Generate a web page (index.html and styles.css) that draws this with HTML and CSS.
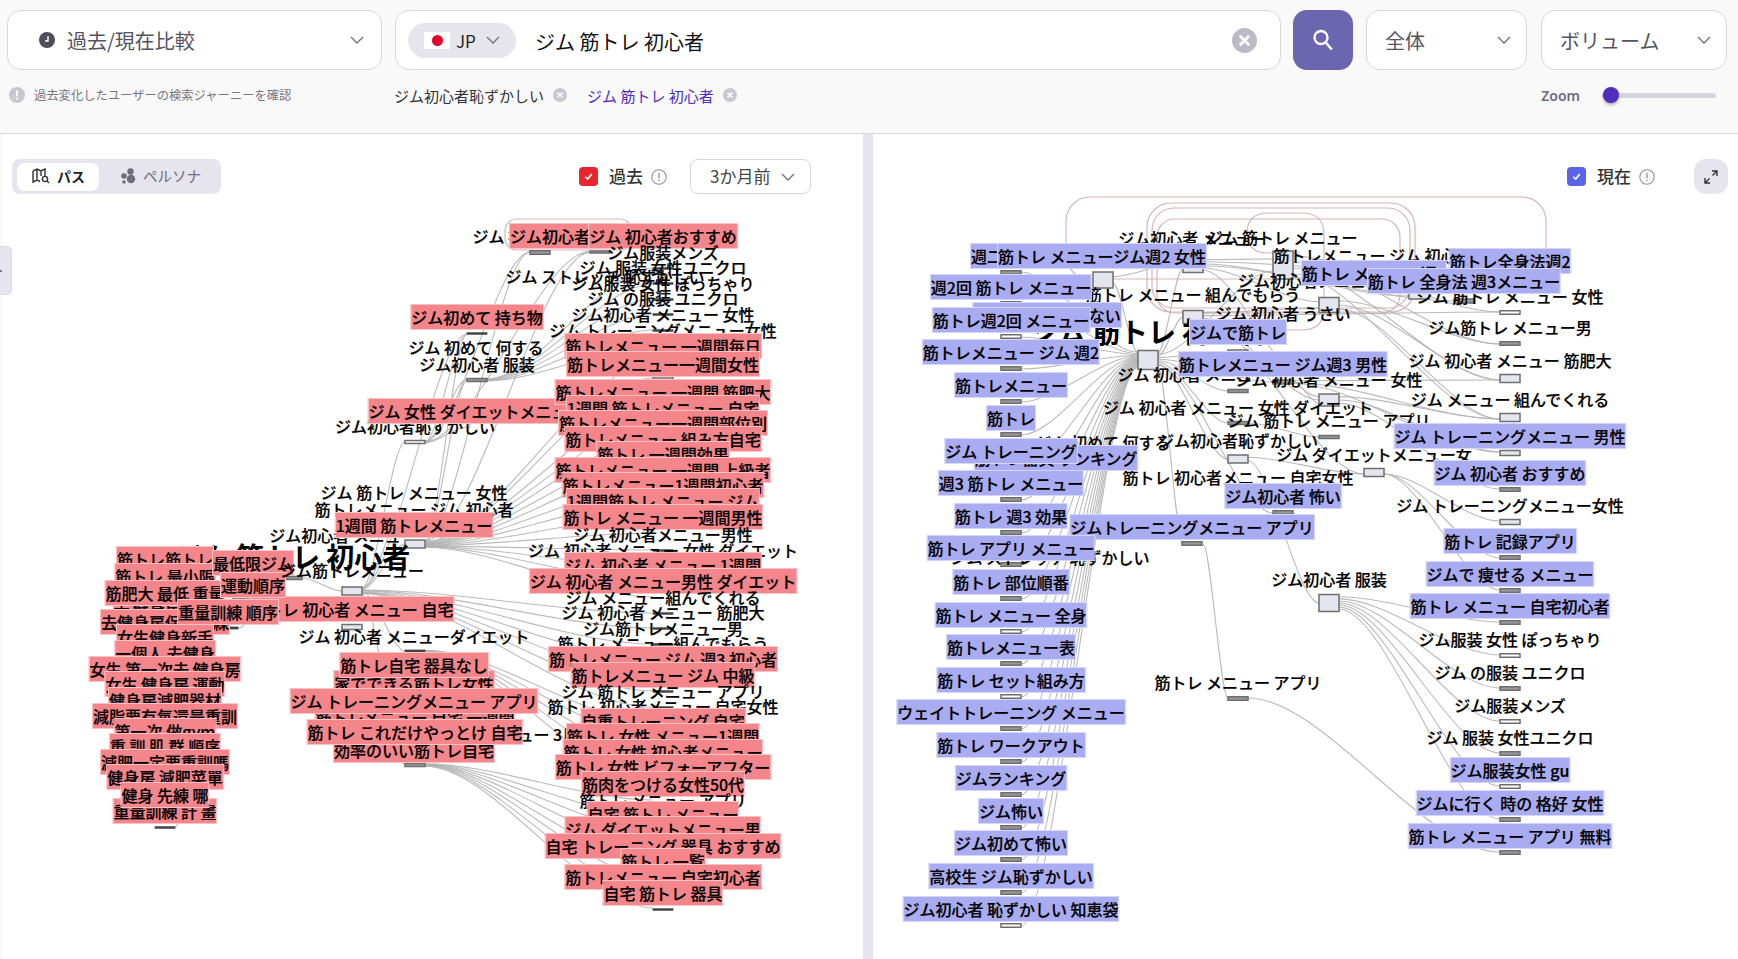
FILE: index.html
```html
<!DOCTYPE html>
<html lang="ja">
<head>
<meta charset="utf-8">
<title>過去/現在比較</title>
<link rel="stylesheet" href="styles.css">
</head>
<body>
<header class="top">
  <div class="row-main">
    <div class="box box-mode">
      <svg class="ico-clock" viewBox="0 0 16 16"><circle cx="8" cy="8" r="8" fill="#4f4d5c"/><path d="M9 4v5H6" fill="none" stroke="#fff" stroke-width="1.4"/></svg>
      <span class="box-text">過去/現在比較</span>
      <svg class="chev" viewBox="0 0 14 8"><path d="M1 1l6 6 6-6"/></svg>
    </div>
    <div class="box box-search">
      <div class="pill">
        <span class="flag"><i></i></span>
        <span class="pill-text">JP</span>
        <svg class="chev" viewBox="0 0 14 8"><path d="M1 1l6 6 6-6"/></svg>
      </div>
      <span class="query">ジム 筋トレ 初心者</span>
      <svg class="ico-clear" viewBox="0 0 24 24"><circle cx="12" cy="12" r="12" fill="#bdbac8"/><path d="M7.5 7.5l9 9M16.5 7.5l-9 9" stroke="#fff" stroke-width="2.6"/></svg>
    </div>
    <button class="btn-search" type="button" aria-label="検索">
      <svg viewBox="0 0 24 24"><circle cx="10" cy="9.5" r="6.5" fill="none" stroke="#fff" stroke-width="2.4"/><path d="M14.8 14.5l6 7" stroke="#fff" stroke-width="2.6"/></svg>
    </button>
    <div class="box box-scope"><span class="box-text">全体</span><svg class="chev" viewBox="0 0 14 8"><path d="M1 1l6 6 6-6"/></svg></div>
    <div class="box box-metric"><span class="box-text">ボリューム</span><svg class="chev" viewBox="0 0 14 8"><path d="M1 1l6 6 6-6"/></svg></div>
  </div>
  <div class="row-sub">
    <div class="hint">
      <svg class="ico-i" viewBox="0 0 16 16"><circle cx="8" cy="8" r="8" fill="#c9c7d1"/><path d="M8 3.5v6M8 11v1.6" stroke="#fff" stroke-width="2"/></svg>
      <span>過去変化したユーザーの検索ジャーニーを確認</span>
    </div>
    <div class="tags">
      <span class="tag">ジム初心者恥ずかしい</span>
      <svg class="ico-x" viewBox="0 0 14 14"><circle cx="7" cy="7" r="7" fill="#c9c7d1"/><path d="M4.5 4.5l5 5M9.5 4.5l-5 5" stroke="#fff" stroke-width="1.6"/></svg>
      <span class="tag tag-on">ジム 筋トレ 初心者</span>
      <svg class="ico-x" viewBox="0 0 14 14"><circle cx="7" cy="7" r="7" fill="#c9c7d1"/><path d="M4.5 4.5l5 5M9.5 4.5l-5 5" stroke="#fff" stroke-width="1.6"/></svg>
    </div>
    <div class="zoom">
      <span class="zoom-label">Zoom</span>
      <div class="track"><span class="thumb"></span></div>
    </div>
  </div>
</header>
<main class="panels">
  <section class="panel panel-past">
    <div class="stage" id="stage-past"></div>
    <span class="side-tab"></span>
    <div class="bar">
      <div class="seg">
        <span class="seg-on">
          <svg viewBox="0 0 18 16" class="seg-ico"><path d="M1 3l4-2 4 2 4-2v7M1 3v11l4-2 3 1.500M5 1v11M9 3v5" fill="none" stroke="#333" stroke-width="1.400"/><circle cx="13" cy="11" r="2.600" fill="none" stroke="#333" stroke-width="1.400"/><path d="M15 13l2 2" stroke="#333" stroke-width="1.400"/></svg>
          パス
        </span>
        <span class="seg-off">
          <svg viewBox="0 0 16 16" class="seg-ico seg-ico-off"><circle cx="10.500" cy="3.500" r="3.200"/><circle cx="4" cy="8" r="2.800"/><circle cx="11" cy="11" r="4.200"/><circle cx="4" cy="14" r="1.800"/></svg>
          ペルソナ
        </span>
      </div>
      <div class="legend">
        <span class="check check-red"><svg viewBox="0 0 12 12"><path d="M3 6.200l2.200 2.200L9 3.800" fill="none" stroke="#fff" stroke-width="1.500"/></svg></span>
        <span class="legend-text">過去</span>
        <svg class="ico-info" viewBox="0 0 16 16"><circle cx="8" cy="8" r="7.200" fill="none" stroke="#8f8d9c" stroke-width="1.100"/><path d="M8 3.800v5.400M8 10.600v1.400" stroke="#8f8d9c" stroke-width="1.300"/></svg>
        <div class="period"><span class="period-text">3か月前</span><svg class="chev" viewBox="0 0 14 8"><path d="M1 1l6 6 6-6"/></svg></div>
      </div>
    </div>
  </section>
  <div class="divider"></div>
  <section class="panel panel-now">
    <div class="stage" id="stage-now"></div>
    <div class="bar bar-now">
      <span class="check check-blue"><svg viewBox="0 0 12 12"><path d="M3 6.200l2.200 2.200L9 3.800" fill="none" stroke="#fff" stroke-width="1.500"/></svg></span>
      <span class="legend-text">現在</span>
      <svg class="ico-info" viewBox="0 0 16 16"><circle cx="8" cy="8" r="7.200" fill="none" stroke="#8f8d9c" stroke-width="1.100"/><path d="M8 3.800v5.400M8 10.600v1.400" stroke="#8f8d9c" stroke-width="1.300"/></svg>
      <span class="expand"><svg viewBox="0 0 14 14"><path d="M8 1h5v5M13 1L8.500 5.500M6 13H1V8M1 13l4.500-4.500" fill="none" stroke="#333" stroke-width="1.400"/></svg></span>
    </div>
  </section>
</main>
<script src="graph.js"></script>
</body>
</html>
```
FILE: styles.css
```css
* { box-sizing: border-box; }
html, body { margin: 0; height: 100%; }
body {
  width: 1738px;
  height: 959px;
  overflow: hidden;
  background: #fff;
  font-family: "Noto Sans CJK JP", "Noto Sans", sans-serif;
  color: #222;
  display: flex;
  flex-direction: column;
}
svg { display: block; flex: none; }

.top {
  height: 134px;
  flex: none;
  background: #f9f9f9;
  border-bottom: 1px solid #d9d7e0;
  padding: 10px 10px 0 7px;
}
.row-main { display: flex; height: 60px; }
.box {
  display: flex;
  align-items: center;
  height: 60px;
  background: #fff;
  border: 1px solid #d8d6e0;
  border-radius: 14px;
}
.box-text { font-size: 20px; color: #55535f; white-space: nowrap; }
.chev { width: 14px; height: 8px; fill: none; stroke: #7b7986; stroke-width: 1.500; margin-left: auto; }
.box-mode { width: 375px; margin-right: 13px; padding: 0 17px 0 31px; }
.ico-clock { width: 16px; height: 16px; margin-right: 12px; }
.box-search { width: 886px; margin-right: 12px; padding: 0 23px 0 12px; }
.pill {
  display: flex;
  align-items: center;
  width: 108px;
  height: 35px;
  padding: 0 16px;
  background: #e7e5ec;
  border-radius: 18px;
}
.flag { width: 26px; height: 17px; background: #fff; display: flex; align-items: center; justify-content: center; }
.flag i { width: 11px; height: 11px; border-radius: 50%; background: #e2002b; }
.pill-text { font-size: 17px; margin-left: 6px; color: #222; }
.query { font-size: 20px; color: #111; margin-left: 19px; padding-top: 2px; }
.ico-clear { width: 25px; height: 25px; margin-left: auto; }
.btn-search {
  width: 60px;
  height: 60px;
  margin-right: 13px;
  padding: 0;
  border: 0;
  border-radius: 14px;
  background: #6c65b0;
  display: flex;
  align-items: center;
  justify-content: center;
}
.btn-search svg { width: 24px; height: 24px; }
.box-scope { width: 161px; margin-right: 14px; padding: 0 15px 0 18px; }
.box-metric { width: 186px; padding: 0 15px 0 18px; }

.row-sub { display: flex; align-items: center; height: 22px; margin-top: 14px; }
.hint { display: flex; align-items: center; width: 385px; margin-left: 2px; font-size: 12.300px; color: #77757f; }
.ico-i { width: 16px; height: 16px; margin-right: 9px; }
.tags { display: flex; align-items: center; }
.tag { font-size: 15px; color: #333; white-space: pre; }
.tag-on { color: #4b2ec0; margin-left: 20px; }
.ico-x { width: 14px; height: 14px; margin-left: 9px; }
.zoom { display: flex; align-items: center; margin-left: auto; margin-right: 12px; }
.zoom-label { font-family: "Noto Sans", sans-serif; font-size: 14px; font-weight: 600; color: #6d6b7c; margin-right: 22px; }
.track { position: relative; width: 114px; height: 5px; background: #d6d4de; border-radius: 3px; }
.thumb {
  position: absolute;
  left: 1px;
  top: -5.500px;
  width: 16px;
  height: 16px;
  border-radius: 50%;
  background: #4f2dbd;
  box-shadow: 0 2px 3px rgba(0,0,0,.3);
}

.panels { flex: 1; display: flex; min-height: 0; }
.panel { position: relative; height: 825px; }
.panel-past { width: 863px; background: linear-gradient(90deg, #f6f6f6, #fff 4px); }
.panel-now { width: 865px; }
.divider { width: 10px; background: #e6e4ec; }
.stage { position: absolute; inset: 0; }
.stage svg { position: absolute; left: 0; top: 0; width: 100%; height: 100%; }
.side-tab {
  position: absolute;
  left: 0;
  top: 112px;
  width: 12px;
  height: 49px;
  background: #e6e4ec;
  border: 1px solid #dcdae3;
  border-left: 0;
  border-radius: 0 5px 5px 0;
}
.side-tab::after {
  content: "";
  position: absolute;
  left: 0;
  top: 23px;
  width: 2px;
  height: 2px;
  background: #777;
}

.bar {
  position: relative;
  display: flex;
  align-items: center;
  justify-content: space-between;
  height: 35px;
  margin-top: 25px;
  padding: 0 52px 0 12px;
}
.seg {
  display: flex;
  align-items: center;
  width: 209px;
  height: 35px;
  padding: 0 5px;
  background: #e6e4ec;
  border-radius: 8px;
}
.seg-on, .seg-off { display: flex; align-items: center; height: 28px; white-space: nowrap; padding-bottom: 2px; }
.seg-on { width: 82px; padding-left: 15px; background: #fff; border-radius: 8px; font-size: 14px; font-weight: 700; color: #222; }
.seg-off { padding-left: 21px; font-size: 14.500px; color: #6f6d7a; }
.seg-ico { width: 18px; height: 16px; margin-right: 7px; }
.seg-ico-off { width: 16px; fill: #6f6d7a; }
.legend { display: flex; align-items: center; }
.check { width: 19px; height: 19px; border-radius: 4px; display: flex; align-items: center; justify-content: center; }
.check svg { width: 13px; height: 13px; }
.check-red { background: #e9252e; }
.check-blue { background: #5b63e6; }
.legend-text { font-size: 17px; font-weight: 500; color: #333; margin-left: 11px; padding-bottom: 2px; }
.ico-info { width: 16px; height: 16px; margin-left: 8px; }
.period {
  display: flex;
  align-items: center;
  width: 121px;
  height: 35px;
  margin-left: 23px;
  padding: 0 15px 0 19px;
  background: #fff;
  border: 1px solid #d8d6e0;
  border-radius: 8px;
  font-size: 17px;
  color: #444;
}
.period-text { padding-bottom: 2px; }
.bar-now { justify-content: flex-end; padding: 0 10px 0 0; }
.expand {
  width: 34px;
  height: 35px;
  margin-left: 39px;
  display: flex;
  align-items: center;
  justify-content: center;
  background: #e6e4ec;
  border-radius: 12px;
}
.expand svg { width: 14px; height: 14px; }

.edge { fill: none; stroke: #b2b2b2; stroke-width: 1.100; stroke-opacity: .9; }
.loop { fill: none; stroke: #d6b6ba; stroke-width: 1.200; }
.node { stroke: #6e6e6e; stroke-width: 1.500; fill: #e4e5ee; }
.node-w { fill: #fff; }
.node-g { fill: #9a9a9a; }
.node-k { fill: #444; stroke: #444; stroke-width: .8; }

.lbl {
  position: absolute;
  height: 24px;
  line-height: 24px;
  font-size: 16px;
  font-weight: 500;
  color: #000;
  -webkit-text-stroke: .2px #000;
  white-space: pre;
  transform: translate(-50%, -50%);
}
.lbl-pink { background: #f4868b; outline: 1px solid #f9c3c6; }
.lbl-blue { background: #a9acf1; outline: 1px solid #d6d7f8; }
.lbl-big { font-size: 28px; height: 36px; line-height: 36px; font-weight: 700; -webkit-text-stroke: 0; }
```
FILE: graph.js
```js
// [text, centre x, centre y, kind (0 plain, 1 highlighted, 2 root), node under the label]
var past = {
  ox: 0, oy: 134, hl: "lbl-pink",
  loops: [[505, 219, 127, 31, 12]],
  extra: [[292, 578, 3, "g"], [352, 591, 8, ""], [415, 544, 8, ""], [228, 628, 2, "k"], [243, 599, 2, "w"], [600, 252, 2, "g"], [663, 378, 2, "w"], [352, 627, 5, ""], [415, 442, 3, "w"], [477, 380, 3, "g"], [415, 765, 3, "g"], [415, 651, 2, "k"]],
  labels: [
    ["ジム 筋トレ 初心者", 292, 557, 2],
    ["ジム初心者 メニュー", 343, 536, 0],
    ["筋トレ 初心者 メニュー 自宅", 352, 610, 1],
    ["筋トレ筋トレ", 165, 560, 1],
    ["筋トレ 最小限", 165, 577, 1],
    ["去 健身房 重量", 165, 609, 1],
    ["筋肥大 最低 重量", 165, 594, 1],
    ["去健身房保持訓練", 165, 623, 1],
    ["女生健身新手", 165, 638, 1],
    ["一個人 去健身", 165, 654, 1],
    ["女生 第一次去 健身房", 165, 670, 1],
    ["女生 健身房 運動", 165, 685, 1],
    ["健身房減肥器材", 165, 701, 1],
    ["減脂要有氧還是重訓", 165, 717, 1],
    ["第一次 做gym", 165, 732, 1],
    ["重 訓 肌 群 順序", 165, 747, 1],
    ["減肥一定要重訓嗎", 165, 763, 1],
    ["健身房 減肥菜單", 165, 778, 1],
    ["重量訓練 計 畫", 165, 812, 1, "k"],
    ["健身 先練 哪", 165, 796, 1],
    ["最低限ジム", 253, 564, 1],
    ["運動順序", 253, 586, 1],
    ["重量訓練 順序", 228, 613, 1],
    ["ジム筋トレメニュー", 352, 571, 0],
    ["ジム 筋トレ メニュー 女性", 414, 493, 0],
    ["筋トレメニュー ジム 初心者", 414, 510, 0],
    ["1週間 筋トレメニュー", 414, 526, 1],
    ["ジム初心者恥ずかしい", 415, 427, 0],
    ["ジム 初心者 メニューダイエット", 414, 637, 0],
    ["家でできる筋トレ女性", 414, 684, 1],
    ["筋トレ自宅 器具なし", 414, 666, 1],
    ["ジム初心者 メニュー 3日", 490, 735, 0],
    ["筋トレメニュー 自宅 一週間", 415, 718, 1],
    ["ジム トレーニングメニュー アプリ", 414, 702, 1],
    ["効率のいい筋トレ自宅", 414, 751, 1],
    ["筋トレ これだけやっとけ 自宅", 415, 733, 1],
    ["ジム初めて 持ち物", 477, 318, 1, "k"],
    ["ジム 初めて 何する", 476, 348, 0],
    ["ジム初心者 服装", 477, 365, 0],
    ["ジム 女性 ダイエットメニュー", 476, 412, 1],
    ["ジム 初心者 何から", 540, 237, 0, "g"],
    ["ジム初心者", 550, 237, 1],
    ["ジム ストレッチ 恥ずかしい", 605, 277, 0],
    ["ジム 初心者おすすめ", 663, 237, 1],
    ["ジム服装メンズ", 663, 253, 0, "k"],
    ["ジム 服装 女性ユニクロ", 663, 268, 0, "k"],
    ["ジム服装 女性 ぽっちゃり", 663, 284, 0, "k"],
    ["ジム の服装 ユニクロ", 663, 299, 0, "k"],
    ["ジム初心者 メニュー 女性", 663, 315, 0, "k"],
    ["ジム トレーニングメニュー女性", 663, 331, 0, "k"],
    ["筋トレメニュー 一週間毎日", 663, 347, 1],
    ["筋トレメニュー一週間女性", 663, 365, 1],
    ["筋トレメニュー 一週間 筋肥大", 663, 393, 1],
    ["1週間 筋トレメニュー 自宅", 663, 409, 1],
    ["筋トレメニュー一週間部位別", 663, 424, 1],
    ["筋トレメニュー 組み方自宅", 663, 440, 1],
    ["筋トレ 一週間効果", 663, 455, 1],
    ["筋トレメニュー 一週間 上級者", 663, 471, 1],
    ["筋トレメニュー1週間初心者", 663, 486, 1],
    ["1週間筋トレ メニュー ジム", 663, 502, 1],
    ["筋トレ メニュー 一週間男性", 663, 518, 1],
    ["ジム 初心者メニュー男性", 663, 535, 0, "k"],
    ["ジム 初心者 メニュー 女性 ダイエット", 663, 551, 0, "k"],
    ["ジム 初心者 メニュー 1週間", 663, 566, 1],
    ["ジム 初心者 メニュー男性 ダイエット", 663, 582, 1],
    ["ジム メニュー組んでくれる", 663, 598, 0, "k"],
    ["ジム 初心者 メニュー 筋肥大", 663, 613, 0, "k"],
    ["ジム筋トレメニュー男", 663, 629, 0, "k"],
    ["筋トレ メニュー組んでもらう", 663, 644, 0],
    ["筋トレメニュー ジム 週3 初心者", 663, 660, 1],
    ["筋トレメニュー ジム 中級", 663, 676, 1, "k"],
    ["ジム 筋トレ メニュー アプリ", 663, 692, 0, "k"],
    ["筋トレ 初心者メニュー 自宅女性", 663, 707, 0],
    ["自重トレーニング 自宅", 663, 722, 1],
    ["筋トレ 女性 メニュー1週間", 663, 737, 1],
    ["筋トレ 女性 初心者メニュー", 663, 753, 1],
    ["筋トレ 女性 ビフォーアフター", 663, 768, 1],
    ["筋肉をつける女性50代", 663, 785, 1],
    ["筋トレ メニュー アプリ", 663, 801, 0],
    ["自宅 筋トレ メニュー", 663, 815, 1],
    ["ジム ダイエットメニュー男", 663, 830, 1],
    ["自宅 トレーニング 器具 おすすめ", 663, 847, 1],
    ["筋トレ 一覧", 663, 862, 1],
    ["筋トレメニュー 自宅初心者", 663, 878, 1],
    ["自宅 筋トレ 器具", 663, 894, 1, "k"]
  ],
  edges: [
    [165, 827, [[228, 628]]],
    [228, 628, [[292, 578]]],
    [243, 599, [[292, 578]]],
    [292, 578, [[352, 591]]],
    [352, 591, [[415, 442], [415, 544], [415, 651], [415, 765], [477, 334], [415, 510]]],
    [415, 442, [[477, 334], [477, 380], [540, 252], [600, 252], [477, 427]]],
    [415, 544, [[477, 334], [477, 380], [540, 252], [600, 252]]],
    [477, 380, [[663, 268], [663, 284], [663, 299], [663, 314], [663, 330], [663, 346]]],
    [415, 544, ys(663, [362, 378, 408, 424, 439, 455, 470, 486, 501, 517, 533, 550, 566, 581, 597])],
    [352, 591, ys(663, [613, 628, 644, 659, 675, 691, 707])],
    [415, 651, ys(663, [722, 737, 752, 768, 784])],
    [415, 765, ys(663, [800, 816, 830, 845, 862, 877, 893, 908])]
  ]
};

var now = {
  ox: 873, oy: 134, hl: "lbl-blue",
  loops: [[1066, 197, 480, 82, 24], [1147, 203, 268, 109, 24], [1152, 208, 258, 100, 22], [1157, 219, 243, 94, 18]],
  paths: ["M1300 253H1268Q1247 253 1247 233Q1247 213 1268 213H1302Q1324 213 1324 235V308Q1324 330 1302 330H1200"],
  extra: [
    [1148, 360, 19, ""], [1103, 280, 16, ""], [1193, 265, 15, ""], [1193, 317, 13, ""],
    [1283, 265, 28, ""], [1329, 305, 15, ""], [1329, 400, 12, ""], [1329, 603, 17, ""],
    [1419, 296, 6, ""], [1464, 301, 4, "g"], [1283, 382, 4, "g"],
    [1238, 352, 4, "w"], [1238, 391, 3, "g"], [1238, 423, 3, "g"], [1238, 459, 8, ""], [1329, 437, 3, "g"]
  ],
  labels: [
    ["ジム初心者 メニュー", 1192, 239, 0],
    ["ジム 筋トレ メニュー", 1282, 238, 0],
    ["筋トレメニュー ジム 初心者", 1373, 256, 0],
    ["ジム初心者メニュー", 1310, 281, 0],
    ["ジム 初心者 うさい", 1283, 314, 0],
    ["筋トレ メニュー 組んでもらう", 1193, 295, 0],
    ["ジム 筋トレ 初心者", 1148, 332, 2],
    ["ジム 初心者 メニュー", 1193, 375, 0],
    ["ジム 初心者 メニュー 女性", 1329, 380, 0],
    ["ジム 初心者 メニュー 女性 ダイエット", 1238, 408, 0],
    ["ジム 筋トレ メニュー アプリ", 1329, 421, 0],
    ["ジム 初めて 何する", 1103, 443, 0],
    ["ジム初心者恥ずかしい", 1238, 441, 0],
    ["ジム ダイエットメニュー女", 1374, 455, 0, 8],
    ["筋トレ 初心者メニュー 自宅女性", 1238, 478, 0],
    ["ジムトレーニングメニュー アプリ", 1192, 528, 1, "g"],
    ["ジム ストレッチ 恥ずかしい", 1050, 558, 0],
    ["筋トレメニュー ジム週3 男性", 1283, 365, 1],
    ["ジムで筋トレ", 1238, 333, 1],
    ["ジム初心者 怖い", 1283, 497, 1, "g"],
    ["ジム初心者 服装", 1329, 580, 0],
    ["筋トレ メニュー アプリ", 1238, 683, 0, "g"],
    ["筋トレ全身法週2", 1510, 262, 1, "g"],
    ["ジム 筋トレ メニュー 女性", 1510, 297, 0, "w"],
    ["ジム筋トレ メニュー男", 1510, 328, 0, "g"],
    ["ジム 初心者 メニュー 筋肥大", 1510, 361, 0, 8],
    ["ジム メニュー 組んでくれる", 1510, 400, 0, 8],
    ["ジム トレーニングメニュー 男性", 1510, 437, 1, 5],
    ["ジム 初心者 おすすめ", 1510, 474, 1, "g"],
    ["ジム トレーニングメニュー女性", 1510, 506, 0, 5],
    ["筋トレ 記録アプリ", 1510, 542, 1, "g"],
    ["ジムで 痩せる メニュー", 1510, 575, 1, "g"],
    ["筋トレ メニュー 自宅初心者", 1510, 607, 1, "g"],
    ["ジム服装 女性 ぽっちゃり", 1510, 640, 0, "w"],
    ["ジム の服装 ユニクロ", 1510, 673, 0, "g"],
    ["ジム服装メンズ", 1510, 706, 0, "w"],
    ["ジム 服装 女性ユニクロ", 1510, 738, 0, "g"],
    ["ジム服装女性 gu", 1510, 771, 1, "w"],
    ["ジムに行く 時の 格好 女性", 1510, 804, 1, "g"],
    ["筋トレ メニュー アプリ 無料", 1510, 837, 1, "g"],
    ["筋トレ メニュー 週2", 1374, 274, 1],
    ["筋トレ 全身法 週3メニュー", 1464, 282, 1],
    ["筋トレ器具 ランキング", 1056, 459, 1],
    ["週二筋トレ", 1011, 257, 1, "g"],
    ["筋トレ メニュージム週2 女性", 1102, 257, 1],
    ["筋トレ メニューない", 1047, 316, 1],
    ["週2回 筋トレ メニュー", 1011, 288, 1, "g"],
    ["筋トレ週2回 メニュー", 1011, 321, 1, "w"],
    ["筋トレメニュー ジム 週2", 1011, 353, 1, "g"],
    ["筋トレメニュー", 1011, 386, 1, "g"],
    ["筋トレ", 1011, 419, 1, "g"],
    ["ジム トレーニング", 1011, 452, 1, "g"],
    ["週3 筋トレ メニュー", 1011, 484, 1, "g"],
    ["筋トレ 週3 効果", 1011, 517, 1, "g"],
    ["筋トレ アプリ メニュー", 1011, 549, 1, "g"],
    ["筋トレ 部位順番", 1011, 583, 1, "g"],
    ["筋トレ メニュー 全身", 1011, 616, 1, "w"],
    ["筋トレメニュー表", 1011, 648, 1, "g"],
    ["筋トレ セット組み方", 1011, 681, 1, "w"],
    ["ウェイトトレーニング メニュー", 1011, 713, 1, "g"],
    ["筋トレ ワークアウト", 1011, 746, 1, "g"],
    ["ジムランキング", 1011, 779, 1, "g"],
    ["ジム怖い", 1011, 812, 1, "g"],
    ["ジム初めて怖い", 1011, 844, 1, "g"],
    ["高校生 ジム恥ずかしい", 1011, 877, 1, "g"],
    ["ジム初心者 恥ずかしい 知恵袋", 1011, 910, 1, "w"]
  ],
  edges: [
    [1011, 272, [[1148, 360]]], [1011, 304, [[1148, 360]]], [1011, 337, [[1148, 360]]], [1011, 369, [[1148, 360]]],
    [1011, 402, [[1148, 360]]], [1011, 435, [[1148, 360]]], [1011, 468, [[1148, 360]]], [1011, 500, [[1148, 360]]],
    [1011, 533, [[1148, 360]]], [1011, 565, [[1148, 360]]], [1011, 599, [[1148, 360]]], [1011, 632, [[1148, 360]]],
    [1011, 664, [[1148, 360]]], [1011, 697, [[1148, 360]]], [1011, 729, [[1148, 360]]], [1011, 762, [[1148, 360]]],
    [1011, 795, [[1148, 360]]], [1011, 828, [[1148, 360]]], [1011, 860, [[1148, 360]]], [1011, 893, [[1148, 360]]],
    [1011, 926, [[1148, 360]]],
    [1103, 280, [[1148, 360], [1193, 265]]],
    [1148, 360, [[1193, 265], [1193, 317], [1238, 352], [1238, 391], [1238, 423], [1238, 459], [1193, 544], [1283, 265], [1283, 382], [1283, 513]]],
    [1193, 265, [[1283, 265], [1329, 305], [1419, 296], [1510, 278], [1464, 301], [1329, 400]]],
    [1193, 317, [[1329, 305], [1329, 400], [1374, 474], [1510, 312]]],
    [1238, 459, [[1329, 603], [1374, 474]]],
    [1283, 265, [[1510, 312], [1510, 344], [1510, 380], [1510, 419]]],
    [1329, 305, [[1510, 344], [1510, 380], [1510, 419]]],
    [1329, 400, [[1510, 419], [1510, 452], [1510, 489]]],
    [1283, 382, [[1510, 380], [1510, 419], [1510, 452], [1329, 400]]],
    [1238, 423, [[1329, 437]]],
    [1374, 474, [[1510, 521], [1510, 558], [1510, 590]]],
    [1329, 603, ys(1510, [622, 655, 688, 721, 753, 786, 819])],
    [1193, 544, [[1238, 698]]],
    [1238, 698, [[1510, 852]]]
  ]
};

function ys(x, list) {
  return list.map(function (y) { return [x, y]; });
}

function svgEl(name, attrs) {
  var el = document.createElementNS("http://www.w3.org/2000/svg", name);
  Object.keys(attrs).forEach(function (k) { el.setAttribute(k, attrs[k]); });
  return el;
}

// Spread the ends of the links that meet at one tall node over that node's height.
function spreadEnds(g) {
  var heights = {};
  g.extra.forEach(function (n) { heights[n[0] + "," + n[1]] = n[2]; });
  var links = [];
  g.edges.forEach(function (e) {
    e[2].forEach(function (c) {
      links.push({ x0: e[0], y0: e[1], x1: c[0], y1: c[1], d0: 0, d1: 0 });
    });
  });
  function spread(keyOf, other, field) {
    var groups = {};
    links.forEach(function (l) {
      var k = keyOf(l);
      (groups[k] = groups[k] || []).push(l);
    });
    Object.keys(groups).forEach(function (k) {
      var h = (heights[k] || 0) * 0.85, list = groups[k];
      list.sort(function (a, b) { return a[other] - b[other]; });
      list.forEach(function (l, i) { l[field] = (i + 0.5) / list.length * h - h / 2; });
    });
  }
  spread(function (l) { return l.x0 + "," + l.y0; }, "y1", "d0");
  spread(function (l) { return l.x1 + "," + l.y1; }, "y0", "d1");
  return links;
}

function draw(stageId, g) {
  var stage = document.getElementById(stageId);
  var svg = svgEl("svg", {});
  stage.appendChild(svg);

  g.loops.forEach(function (r) {
    svg.appendChild(svgEl("rect", { "class": "loop", x: r[0] - g.ox, y: r[1] - g.oy, width: r[2], height: r[3], rx: r[4] }));
  });
  (g.paths || []).forEach(function (d) {
    var p = svgEl("path", { "class": "loop", d: d, transform: "translate(" + (-g.ox) + " " + (-g.oy) + ")" });
    svg.appendChild(p);
  });
  spreadEnds(g).forEach(function (l) {
    var x0 = l.x0 - g.ox + 10, y0 = l.y0 + l.d0 - g.oy, x1 = l.x1 - g.ox - 10, y1 = l.y1 + l.d1 - g.oy;
    var k = (x1 - x0) * 0.3;
    svg.appendChild(svgEl("path", { "class": "edge", d: "M" + x0 + " " + y0 + "C" + (x0 + k) + " " + y0 + " " + (x1 - k) + " " + y1 + " " + x1 + " " + y1 }));
  });

  function node(x, y, spec, h) {
    var tone = spec ? " node-" + spec : "";
    svg.appendChild(svgEl("rect", { "class": "node" + tone, x: x - 10 - g.ox, y: y - h / 2 - g.oy, width: 20, height: h }));
  }
  g.extra.forEach(function (n) { node(n[0], n[1], n[3], n[2]); });
  g.labels.forEach(function (l) {
    if (l[4] === undefined) return;
    if (typeof l[4] === "number") node(l[1], l[2] + 15.5 + l[4] / 2 - 2, "", l[4]);
    else node(l[1], l[2] + 15.5, l[4], l[4] === "k" ? 1.5 : 3.5);
  });

  g.labels.forEach(function (l) {
    var s = document.createElement("span");
    s.className = "lbl" + (l[3] === 1 ? " " + g.hl : "") + (l[3] === 2 ? " lbl-big" : "");
    s.textContent = l[0];
    s.style.left = (l[1] - g.ox) + "px";
    s.style.top = (l[2] - 1 - g.oy) + "px";
    stage.appendChild(s);
  });
}

draw("stage-past", past);
draw("stage-now", now);
```
